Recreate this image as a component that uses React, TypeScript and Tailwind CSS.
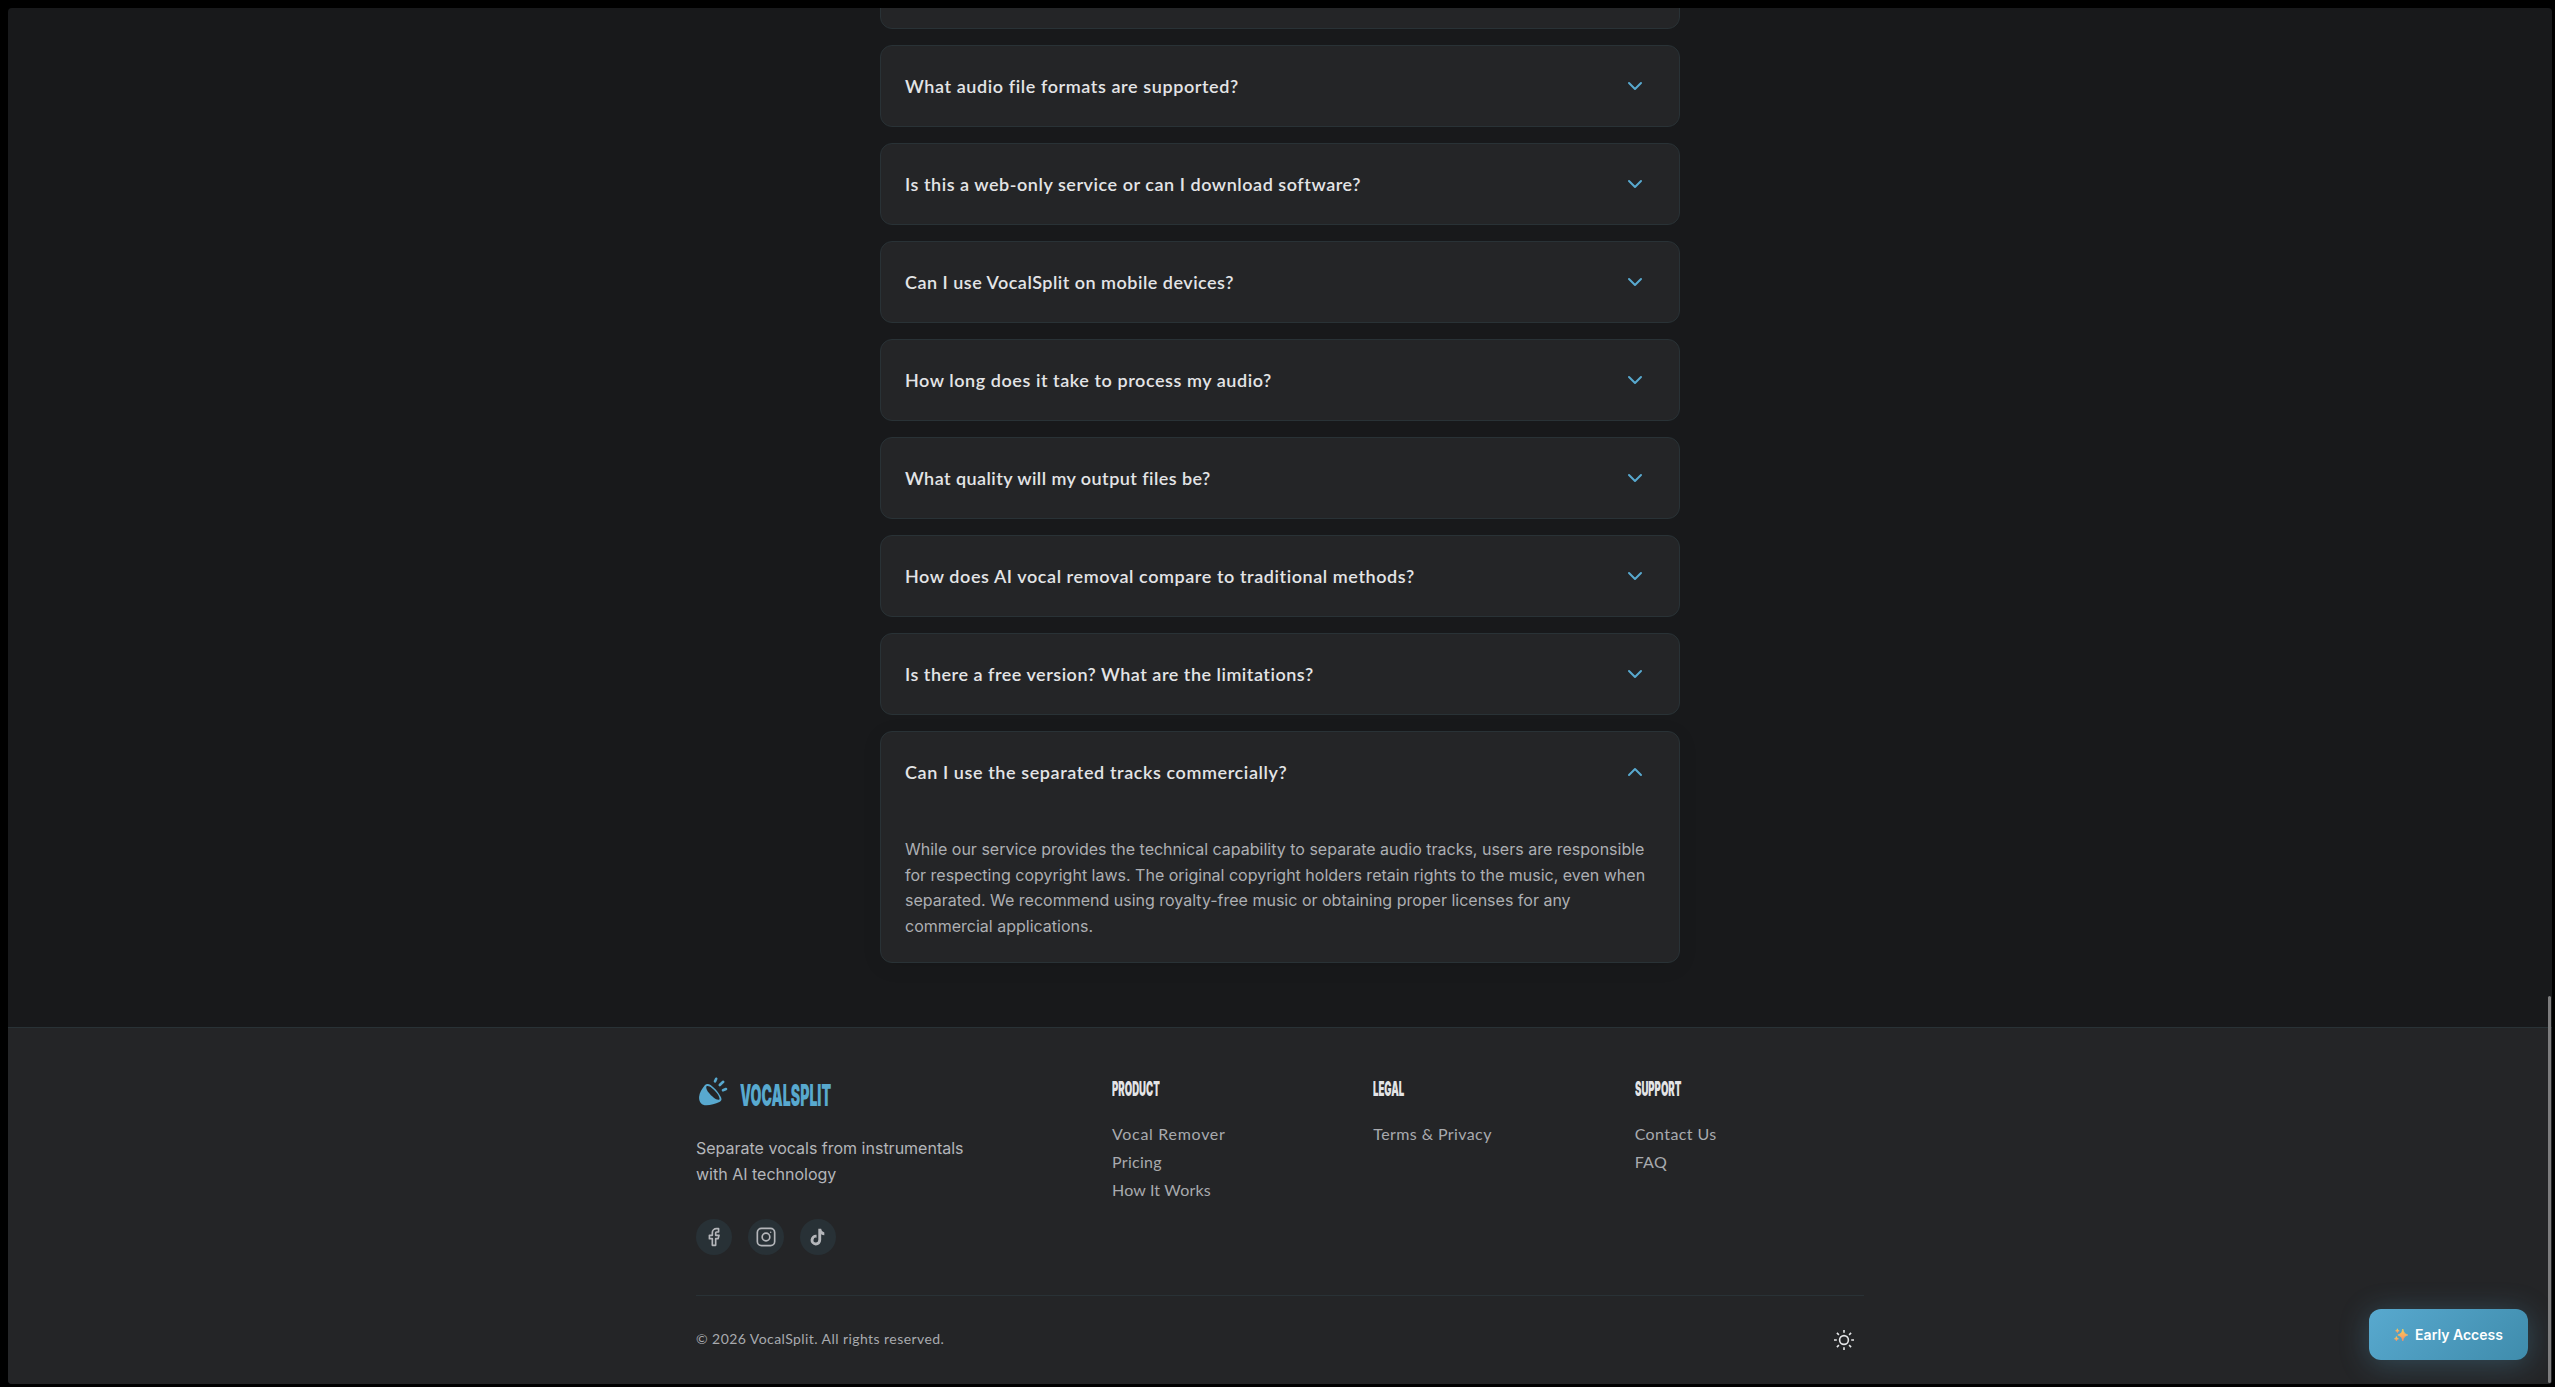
import { useState } from "react";
import { clsx } from "clsx";
import { ChevronDown } from "lucide-react";

const FAQS = [
  { q: "What audio file formats are supported?", fit: "tracking-[0.59px]" },
  { q: "Is this a web-only service or can I download software?", fit: "tracking-[0.54px]" },
  { q: "Can I use VocalSplit on mobile devices?", fit: "tracking-[0.49px]" },
  { q: "How long does it take to process my audio?", fit: "tracking-[0.56px]" },
  { q: "What quality will my output files be?", fit: "tracking-[0.44px]" },
  { q: "How does AI vocal removal compare to traditional methods?", fit: "tracking-[0.57px]" },
  { q: "Is there a free version? What are the limitations?", fit: "tracking-[0.51px]" },
  {
    q: "Can I use the separated tracks commercially?",
    fit: "tracking-[0.59px]",
    a: [
      "While our service provides the technical capability to separate audio tracks, users are responsible",
      "for respecting copyright laws. The original copyright holders retain rights to the music, even when",
      "separated. We recommend using royalty-free music or obtaining proper licenses for any",
      "commercial applications.",
    ],
  },
];

const COLUMNS = [
  {
    title: "PRODUCT",
    links: [
      { label: "Vocal Remover", fit: "tracking-[0.7px]" },
      { label: "Pricing", fit: "tracking-[0.3px]" },
      { label: "How It Works", fit: "tracking-[0.17px]" },
    ],
  },
  { title: "LEGAL", links: [{ label: "Terms & Privacy", fit: "tracking-[0.4px]" }] },
  {
    title: "SUPPORT",
    links: [
      { label: "Contact Us", fit: "tracking-[0.4px]" },
      { label: "FAQ", fit: "tracking-[0.3px]" },
    ],
  },
];

function LogoMark() {
  return (
    <svg viewBox="0 0 32 32" className="h-8 w-8 shrink-0 fill-[#58a9cf]">
      <path
        fillRule="evenodd"
        d="M8.6 8.4C10 6.6 12.4 6.4 14.6 7.9C19.6 11.4 23.6 16.8 25.2 20.8C26 22.8 25.2 24.2 23.4 25C19 27 13 28.8 8.6 28.2C4.6 27.6 2.8 24 3.1 19.8C3.4 15.6 6.2 11.4 8.6 8.4ZM11 9C9.6 9.6 10.2 12.4 12.6 15.6C15.6 19.4 20.4 23.4 23 22.8C24.4 22.4 23.2 19 20.4 15.4C17.2 11.4 13 8.2 11 9Z"
      />
      <g className="fill-none stroke-[#58a9cf]" strokeWidth="2.6" strokeLinecap="round">
        <path d="M19 4.4L20.2 1.8M23.8 8L27.2 4.8M27 13.2L30 12" />
      </g>
    </svg>
  );
}

function FacebookIcon() {
  return (
    <svg viewBox="0 0 24 24" className="h-5 w-5 fill-none stroke-[#b4b6ba]" strokeWidth="2" strokeLinejoin="round">
      <path d="M17.5 2H15a5 5 0 0 0-5 5v3H6.5v4H10v8h4v-8h3l1-4h-4V7a1 1 0 0 1 1-1h2.5Z" />
    </svg>
  );
}

function InstagramIcon() {
  return (
    <svg viewBox="0 0 24 24" className="h-5 w-5 fill-none stroke-[#b4b6ba]" strokeWidth="2">
      <rect x="1.6" y="1.6" width="20.8" height="20.8" rx="5" />
      <circle cx="12" cy="12" r="4.6" />
      <circle cx="17.6" cy="6.4" r="0.9" className="fill-[#b4b6ba] stroke-none" />
    </svg>
  );
}

function TiktokIcon() {
  return (
    <svg viewBox="0 0 24 24" className="h-5 w-5 fill-[#b4b6ba]">
      <path d="M19.59 6.69a4.83 4.83 0 0 1-3.77-4.25V2h-3.45v13.67a2.89 2.89 0 1 1-2.1-2.77V9.4a6.37 6.37 0 1 0 5.55 6.32V8.7a8.2 8.2 0 0 0 3.77 1.1Z" />
    </svg>
  );
}

function SunIcon() {
  return (
    <svg viewBox="0 0 20 20" className="h-5 w-5 fill-none stroke-[#e3e4e6]" strokeWidth="1.6">
      <circle cx="10" cy="10" r="4.4" />
      <path d="M10 0v2.8M10 17.2V20M0 10h2.8M17.2 10H20M2.9 2.9l2 2M15.1 15.1l2 2M2.9 17.1l2-2M15.1 4.9l2-2" />
    </svg>
  );
}

function Sparkles() {
  return (
    <svg viewBox="0 0 14 14" className="h-3.5 w-3.5">
      <defs>
        <linearGradient id="spark" x1="0" y1="0" x2="0" y2="1">
          <stop offset="0" stopColor="#fcd354" />
          <stop offset="1" stopColor="#f98a68" />
        </linearGradient>
      </defs>
      <g fill="url(#spark)" stroke="url(#spark)" strokeWidth="0.7" strokeLinejoin="round">
        <path d="M8.8 1C9.6 4.5 10.6 5.9 13.8 7C10.6 8.1 9.6 9.5 8.8 13C8 9.5 7 8.1 3.8 7C7 5.9 8 4.5 8.8 1Z" />
        <path d="M3.4 .8C3.7 2 4.1 2.4 5.2 2.8C4.1 3.2 3.7 3.6 3.4 4.8C3.1 3.6 2.7 3.2 1.6 2.8C2.7 2.4 3.1 2 3.4 .8Z" />
        <path d="M2.4 8.6C2.7 9.9 3.2 10.4 4.5 10.8C3.2 11.2 2.7 11.7 2.4 13C2.1 11.7 1.6 11.2 .4 10.8C1.6 10.4 2.1 9.9 2.4 8.6Z" />
      </g>
    </svg>
  );
}

export default function App() {
  const [open, setOpen] = useState(FAQS.length - 1);

  return (
    <div className="h-[1387px] w-[2555px] overflow-hidden bg-black pt-2 pr-[3px] pb-[3px] pl-2 font-['Inter',sans-serif]">
      <div className="relative flex h-[1376px] flex-col overflow-hidden rounded-[4px] bg-[#18191b]">
        <main className="flex h-[1019px] shrink-0 flex-col items-center justify-end gap-4 pb-16">
          <div className="h-[82px] w-[800px] shrink-0 rounded-xl border border-[#293236] bg-[#242527]" />
          {FAQS.map((item, i) => (
            <section
              key={item.q}
              className={clsx(
                "w-[800px] shrink-0 rounded-xl border border-[#293236] bg-[#242527]",
                open === i && "shadow-[0_4px_20px_rgba(0,0,0,0.08)]",
              )}
            >
              <button
                className="flex h-20 w-full items-center justify-between pr-8 pl-6 text-left"
                onClick={() => setOpen(open === i ? -1 : i)}
              >
                <span
                  className={clsx(
                    "font-['Lato',sans-serif] text-[18px] leading-6 font-semibold whitespace-nowrap text-[#e3e4e6]",
                    item.fit,
                  )}
                >
                  {item.q}
                </span>
                <ChevronDown
                  className={clsx("h-6 w-6 text-[#58a9cf]", open === i && "rotate-180")}
                  strokeWidth={2}
                />
              </button>
              {item.a && open === i && (
                <p className="px-6 pt-[25px] pb-[22.6px] text-[16px] leading-[25.6px] text-[#adafb3]">
                  {item.a.map((line) => (
                    <span key={line} className="block whitespace-nowrap">
                      {line}
                    </span>
                  ))}
                </p>
              )}
            </section>
          ))}
        </main>

        <footer className="flex flex-1 flex-col items-center border-t border-[#293236] bg-[#242527]">
          <div className="flex h-[268px] w-[1168px] border-b border-[#293236] pt-[49px]">
            <div className="w-[416px] shrink-0">
              <div className="flex h-8 items-center gap-3">
                <LogoMark />
                <span className="origin-left scale-x-[0.47] pt-1 text-[30px] leading-8 font-black text-[#58a9cf]">
                  VOCALSPLIT
                </span>
              </div>
              <p className="mt-[27px] text-[16px] leading-[25.6px] text-[#b4b6ba]">
                Separate vocals from instrumentals
                <br />
                with AI technology
              </p>
              <div className="mt-[31.8px] flex gap-4">
                {[FacebookIcon, InstagramIcon, TiktokIcon].map((Icon, i) => (
                  <a key={i} className="flex h-9 w-9 items-center justify-center rounded-full bg-[#283136]">
                    <Icon />
                  </a>
                ))}
              </div>
            </div>
            {COLUMNS.map((col) => (
              <nav key={col.title} className="w-[261.33px] shrink-0">
                <h3 className="h-[45px] origin-left scale-x-[0.48] text-[20px] leading-6 font-black text-[#e3e4e6]">
                  {col.title}
                </h3>
                {col.links.map((link) => (
                  <a
                    key={link.label}
                    className={clsx(
                      "block h-7 font-['Lato',sans-serif] text-[16px] leading-6 text-[#a8aaae]",
                      link.fit,
                    )}
                  >
                    {link.label}
                  </a>
                ))}
              </nav>
            ))}
          </div>
          <div className="flex h-[88px] w-[1168px] items-center justify-between pr-[10px]">
            <p className="pb-[3px] font-['Lato',sans-serif] text-[14px] tracking-[0.43px] text-[#a8aaae]">
              © 2026 VocalSplit. All rights reserved.
            </p>
            <SunIcon />
          </div>
        </footer>

        <button className="absolute right-[24px] bottom-[24px] flex h-[51px] w-[159px] items-center justify-center gap-[7px] rounded-xl bg-linear-135 from-[#58a9cf] to-[#3f8cac] text-[14px] font-semibold text-white shadow-[0_4px_30px_rgba(88,169,207,0.3)]">
          <Sparkles />
          Early Access
        </button>
        <div className="absolute right-px bottom-px h-[387px] w-[3px] rounded-full bg-[#7c7c7d]" />
      </div>
    </div>
  );
}
